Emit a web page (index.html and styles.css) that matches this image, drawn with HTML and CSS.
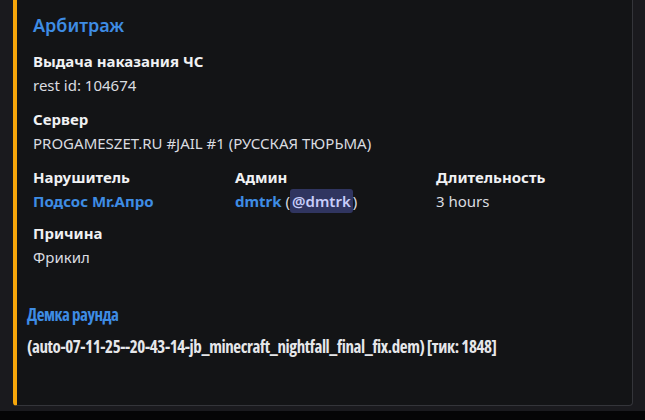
FILE: index.html
```html
<!DOCTYPE html>
<html>
<head>
    <link rel="stylesheet" href="styles.css">
</head>
<body>
    <div class="page">
        <div class="embed">
            <div class="embed-title">Арбитраж</div>
            <div class="field">
                <div class="field-name">Выдача наказания ЧС</div>
                <div class="field-value">rest id: 104674</div>
            </div>
            <div class="field">
                <div class="field-name">Сервер</div>
                <div class="field-value">PROGAMESZET.RU #JAIL #1 (РУССКАЯ ТЮРЬМА)</div>
            </div>
            <div class="field-row">
                <div class="field">
                    <div class="field-name">Нарушитель</div>
                    <div class="field-value"><span class="link">Подсос Mr.Апро</span></div>
                </div>
                <div class="field">
                    <div class="field-name">Админ</div>
                    <div class="field-value"><span class="link">dmtrk</span> (<span class="mention">@dmtrk</span>)</div>
                </div>
                <div class="field">
                    <div class="field-name">Длительность</div>
                    <div class="field-value">3 hours</div>
                </div>
            </div>
            <div class="field">
                <div class="field-name">Причина</div>
                <div class="field-value">Фрикил</div>
            </div>
            <div class="demo">
                <div class="demo-title">Демка раунда</div>
                <div class="demo-file">(auto-07-11-25--20-43-14-jb_minecraft_nightfall_final_fix.dem) [тик: 1848]</div>
            </div>
        </div>
    </div>
    <div class="bottom-bar"></div>
</body>
</html>
```

FILE: styles.css
```css
body {
    margin: 0;
    background-color: rgb(26, 26, 30);
    font-family: "Noto Sans", "Open Sans", sans-serif;
    overflow: hidden;
}
.page {
    display: flex;
    align-items: flex-start;
    height: 411px;
    padding-left: 13px;
}
.embed {
    width: 620px;
    height: 414px;
    margin-top: -8px;
    box-sizing: border-box;
    background-color: rgb(19, 20, 22);
    border: 1px solid rgb(52, 53, 58);
    border-left: 4px solid rgb(246, 166, 10);
    border-radius: 4px;
    padding: 20px 16px 0 16px;
}
.embed-title {
    color: rgb(62, 140, 228);
    font-size: 18px;
    font-weight: 600;
    line-height: 24px;
    margin-bottom: 14px;
}
.field {
    margin-bottom: 14px;
}
.field-row .field {
    margin-bottom: 12px;
}
.field-name {
    color: rgb(240, 241, 243);
    font-size: 15px;
    font-weight: 700;
    line-height: 20px;
}
.field-value {
    color: rgb(218, 220, 224);
    font-size: 15px;
    line-height: 20px;
    margin-top: 4px;
}
.field-row {
    display: grid;
    grid-template-columns: 202px 201px 1fr;
}
.link {
    color: rgb(62, 140, 228);
    font-weight: 700;
}
.mention {
    color: rgb(200, 205, 250);
    background-color: rgb(48, 53, 96);
    border-radius: 3px;
    padding: 2px 2px;
    font-weight: 600;
}
.demo {
    margin-left: -6px;
    margin-top: 37px;
}
.demo-title,
.demo-file {
    font-family: "Open Sans", sans-serif;
    font-stretch: 75%;
    font-size: 17px;
    font-weight: 700;
    line-height: 22px;
    letter-spacing: -0.5px;
}
.demo-title {
    color: rgb(62, 140, 228);
}
.demo-file {
    color: rgb(230, 231, 234);
    margin-top: 10px;
    letter-spacing: -0.4px;
}
.bottom-bar {
    height: 9px;
    background-color: rgb(5, 5, 6);
}
```
